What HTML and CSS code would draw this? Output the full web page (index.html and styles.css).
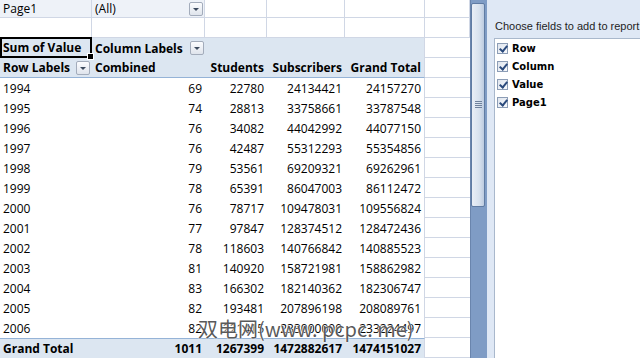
FILE: index.html
```html
<!DOCTYPE html>
<html lang="en">
<head>
    <meta charset="UTF-8">
    <title>PivotTable</title>
    <link rel="stylesheet" href="styles.css">
</head>
<body>
    <div class="window">
        <div class="sheet">
            <div class="row short page">
                <div class="cell">Page1</div>
                <div class="cell">(All)<span class="drop"></span></div>
                <div class="cell"></div>
                <div class="cell"></div>
                <div class="cell"></div>
                <div class="cell f"></div>
            </div>
            <div class="row plain">
                <div class="cell"></div>
                <div class="cell"></div>
                <div class="cell"></div>
                <div class="cell"></div>
                <div class="cell"></div>
                <div class="cell f"></div>
            </div>
            <div class="row head">
                <div class="cell selected">Sum of Value<span class="handle"></span></div>
                <div class="cell">Column Labels<span class="drop"></span></div>
                <div class="cell"></div>
                <div class="cell"></div>
                <div class="cell"></div>
                <div class="cell f"></div>
            </div>
            <div class="row head sub">
                <div class="cell">Row Labels<span class="drop"></span></div>
                <div class="cell">Combined</div>
                <div class="cell num">Students</div>
                <div class="cell num">Subscribers</div>
                <div class="cell num">Grand Total</div>
                <div class="cell f"></div>
            </div>
            <div id="rows"></div>
            <div class="row total">
                <div class="cell">Grand Total</div>
                <div class="cell num">1011</div>
                <div class="cell num">1267399</div>
                <div class="cell num">1472882617</div>
                <div class="cell num">1474151027</div>
                <div class="cell f"></div>
            </div>
            <div class="watermark">双电网(www. pcpc. me)</div>
        </div>

        <div class="scrollbar">
            <div class="thumb"><span class="grip"></span></div>
        </div>

        <div class="panel">
            <div class="panel-title">Choose fields to add to report:</div>
            <div class="field-list">
                <label class="field"><span class="check"></span>Row</label>
                <label class="field"><span class="check"></span>Column</label>
                <label class="field"><span class="check"></span>Value</label>
                <label class="field"><span class="check"></span>Page1</label>
            </div>
        </div>
    </div>

    <script>
        const data = [
            ["1994", 69, 22780, 24134421, 24157270],
            ["1995", 74, 28813, 33758661, 33787548],
            ["1996", 76, 34082, 44042992, 44077150],
            ["1997", 76, 42487, 55312293, 55354856],
            ["1998", 79, 53561, 69209321, 69262961],
            ["1999", 78, 65391, 86047003, 86112472],
            ["2000", 76, 78717, 109478031, 109556824],
            ["2001", 77, 97847, 128374512, 128472436],
            ["2002", 78, 118603, 140766842, 140885523],
            ["2003", 81, 140920, 158721981, 158862982],
            ["2004", 83, 166302, 182140362, 182306747],
            ["2005", 82, 193481, 207896198, 208089761],
            ["2006", 82, 221415, 233000000, 233224497]
        ];

        const rows = document.getElementById("rows");
        data.forEach(function(item) {
            const row = document.createElement("div");
            row.className = "row data";
            row.innerHTML = `
                <div class="cell">${item[0]}</div>
                <div class="cell num">${item[1]}</div>
                <div class="cell num">${item[2]}</div>
                <div class="cell num">${item[3]}</div>
                <div class="cell num">${item[4]}</div>
                <div class="cell f"></div>
            `;
            rows.appendChild(row);
        });
    </script>
</body>
</html>
```

FILE: styles.css
```css
:root {
    --grid: #d0d7e5;
    --pivot-fill: #dce6f1;
    --pivot-line: #95b3d7;
    --panel-bg: #dfe8f5;
}

body {
    margin: 0;
    overflow: hidden;
    font-family: 'Open Sans', 'Noto Sans', sans-serif;
    font-size: 12px;
    color: #000;
}

.window {
    display: flex;
    width: 640px;
    height: 358px;
    overflow: hidden;
}

/* Sheet */
.sheet {
    position: relative;
    width: 470px;
    flex-shrink: 0;
    background: #fff;
    overflow: hidden;
}

.row {
    display: grid;
    grid-template-columns: 92px 113px 62px 78px 80px 45px;
    height: 20px;
}

.row.short {
    height: 18px;
}

.cell {
    position: relative;
    display: flex;
    align-items: center;
    box-sizing: border-box;
    padding: 0 3px;
    white-space: nowrap;
}

.cell.num {
    justify-content: flex-end;
    padding-right: 3px;
}

.cell:nth-child(5) {
    border-right: 1px solid var(--grid);
}

.cell.f {
    border-bottom: 1px solid var(--grid);
}

.page .cell,
.plain .cell {
    border-right: 1px solid var(--grid);
    border-bottom: 1px solid var(--grid);
}

.page .cell:nth-child(-n+2) {
    background: #eef2f8;
}

.head .cell:not(.f),
.total .cell:not(.f) {
    background: var(--pivot-fill);
    font-weight: bold;
}

.head.sub .cell:not(.f) {
    border-bottom: 1px solid var(--pivot-line);
}

.total .cell:not(.f) {
    border-top: 1px solid var(--pivot-line);
}

.cell.selected {
    box-shadow: inset 0 0 0 2px #000;
    margin: -1px 0 0 0;
    height: 21px;
}

.handle {
    position: absolute;
    right: -2px;
    bottom: -2px;
    width: 5px;
    height: 5px;
    background: #000;
    border: 1px solid #fff;
    z-index: 2;
}

.drop {
    position: absolute;
    right: 1px;
    top: 50%;
    width: 14px;
    height: 14px;
    margin-top: -7px;
    box-sizing: border-box;
    border: 1px solid #a3acbb;
    border-radius: 2px;
    background: linear-gradient(#fbfcfe, #dfe4ec);
}

.drop::after {
    content: "";
    position: absolute;
    left: 3px;
    top: 5px;
    border-left: 3px solid transparent;
    border-right: 3px solid transparent;
    border-top: 3px solid #3c4a5e;
}

.head.sub .cell:first-child .drop {
    right: 2px;
}

.watermark {
    position: absolute;
    left: 198px;
    top: 314px;
    font-family: 'Noto Sans CJK SC', 'DejaVu Sans', sans-serif;
    font-size: 20px;
    color: rgba(45, 45, 45, 0.8);
    text-shadow: 0 0 2px #fff, 0 0 1px #fff;
    white-space: nowrap;
}

/* Scrollbar */
.scrollbar {
    position: relative;
    width: 17px;
    flex-shrink: 0;
    background: #7f9cc5;
    border-left: 1px solid #6a85ad;
    box-sizing: border-box;
}

.thumb {
    position: absolute;
    left: 0;
    top: 3px;
    width: 14px;
    height: 204px;
    box-sizing: border-box;
    border: 1px solid #5f7ba3;
    border-radius: 2px;
    background: linear-gradient(to right, #e9eef6, #d7e1ee 60%, #bccbe0);
}

.grip {
    position: absolute;
    left: 3px;
    top: 97px;
    width: 7px;
    height: 7px;
    background: repeating-linear-gradient(#6f819c 0 1px, transparent 1px 2px);
}

/* Field list panel */
.panel {
    flex: 1;
    background: var(--panel-bg);
    padding: 20px 0 0 7px;
    display: flex;
    flex-direction: column;
    font-family: 'DejaVu Sans', sans-serif;
    font-size: 10px;
}

.panel-title {
    height: 13px;
    margin: 0 0 5px 1px;
    white-space: nowrap;
    font-family: 'Liberation Sans', sans-serif;
    font-size: 11px;
    color: #1e1e1e;
}

.field-list {
    flex: 1;
    background: #fff;
    border-top: 1px solid #a9b8cc;
    border-left: 1px solid #a9b8cc;
}

.field {
    display: flex;
    align-items: center;
    height: 18px;
    font-weight: bold;
    padding-left: 2px;
}

.check {
    position: relative;
    width: 11px;
    height: 11px;
    margin-right: 4px;
    box-sizing: border-box;
    border: 1px solid #8c9db6;
    background: linear-gradient(135deg, #dfe5ee, #f7f9fc);
}

.check::after {
    content: "";
    position: absolute;
    left: 3px;
    top: 0px;
    width: 3px;
    height: 6px;
    border-right: 2px solid #2b4a7c;
    border-bottom: 2px solid #2b4a7c;
    transform: rotate(40deg);
}
```
